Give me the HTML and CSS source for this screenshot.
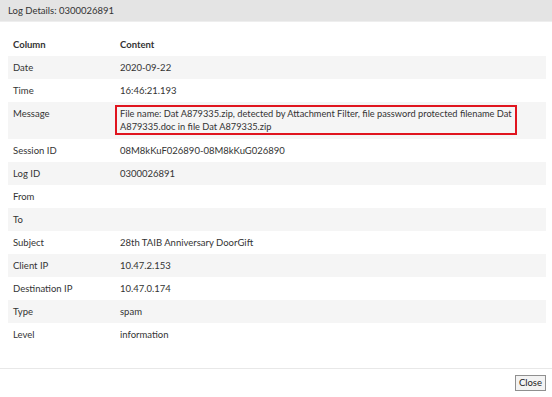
FILE: index.html
```html
<!DOCTYPE html>
<html>
<head>
<meta charset="utf-8">
<link rel="stylesheet" href="styles.css">
</head>
<body>
<div class="dialog">
  <div class="header">Log Details: 0300026891</div>
  <div class="content">
    <table class="details">
      <thead>
        <tr><th class="col1">Column</th><th>Content</th></tr>
      </thead>
      <tbody>
        <tr><td>Date</td><td>2020-09-22</td></tr>
        <tr><td>Time</td><td>16:46:21.193</td></tr>
        <tr><td>Message</td><td><div class="highlight">File name: Dat A879335.zip, detected by Attachment Filter, file password protected filename Dat A879335.doc in file Dat A879335.zip</div></td></tr>
        <tr><td>Session ID</td><td>08M8kKuF026890-08M8kKuG026890</td></tr>
        <tr><td>Log ID</td><td>0300026891</td></tr>
        <tr><td>From</td><td></td></tr>
        <tr><td>To</td><td></td></tr>
        <tr><td>Subject</td><td>28th TAIB Anniversary DoorGift</td></tr>
        <tr><td>Client IP</td><td>10.47.2.153</td></tr>
        <tr><td>Destination IP</td><td>10.47.0.174</td></tr>
        <tr><td>Type</td><td>spam</td></tr>
        <tr><td>Level</td><td>information</td></tr>
      </tbody>
    </table>
  </div>
  <div class="footer">
    <button class="close-btn">Close</button>
  </div>
</div>
</body>
</html>
```

FILE: styles.css
```css
html, body {
  margin: 0;
  padding: 0;
  background: #ffffff;
}
.dialog {
  width: 552px;
  height: 397px;
  display: flex;
  flex-direction: column;
  font-family: Lato, "Open Sans", sans-serif;
  font-size: 9.5px;
  color: #333333;
}
.header {
  height: 21px;
  line-height: 21px;
  padding-left: 8px;
  background: #e4e4e4;
  border-bottom: 1px solid #eeeeee;
  color: #333;
}
.content {
  padding: 11px 6px 0 8px;
  flex: 1;
}
.details {
  width: 100%;
  border-collapse: collapse;
}
.details th, .details td {
  text-align: left;
  vertical-align: top;
  padding: 5px 5px;
  line-height: 13px;
}
.details th {
  font-weight: bold;
}
.details .col1 {
  width: 97px;
}
.details tbody tr:nth-child(odd) {
  background: #f5f5f5;
}
.highlight {
  border: 2px solid #e0141e;
  padding: 0 1px 0 3px;
  margin: -2px 0 -1px -5px;
  width: 394px;
  font-size: 9.25px;
}
.footer {
  border-top: 1px solid #e8e8e8;
  height: 28px;
  display: flex;
  justify-content: flex-end;
  align-items: center;
  padding-right: 6px;
}
.close-btn {
  font-family: Lato, "Open Sans", sans-serif;
  font-size: 9.5px;
  color: #222;
  background: #f3f3f3;
  border: 1px solid #8f8f8f;
  padding: 1px 3px;
  height: 16px;
  line-height: 12px;
}
```
